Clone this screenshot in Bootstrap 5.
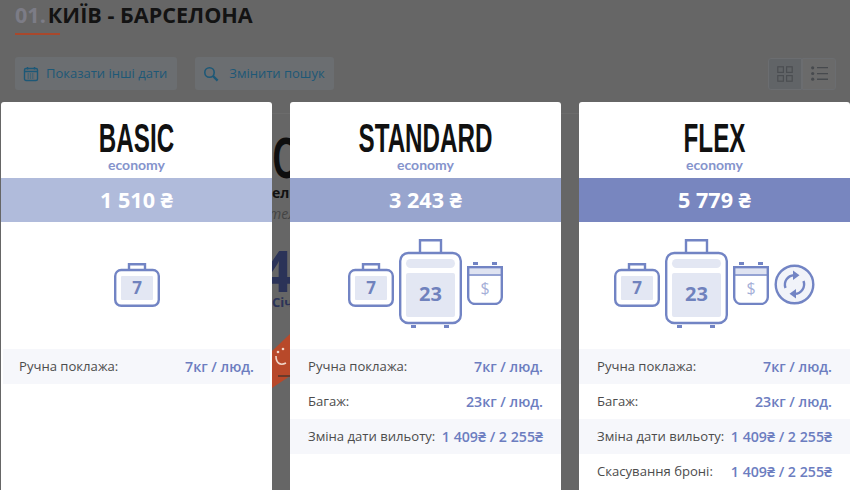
<!DOCTYPE html>
<html lang="uk">
<head>
<meta charset="utf-8">
<title>Київ - Барселона</title>
<link href="https://cdn.jsdelivr.net/npm/bootstrap@5.3.0/dist/css/bootstrap.min.css" rel="stylesheet">
<style>
html,body{height:490px;overflow:hidden}
body{background:#666;font-family:"Open Sans","Noto Sans",sans-serif;color:#4c4c4c}
.stage{position:relative;height:490px;overflow:hidden;padding:0 14px 0 15px}
.trip-title{font-size:21.6px;line-height:28px;font-weight:700;color:#131313;margin:0;padding-top:1px;white-space:nowrap}
.trip-title span{color:#7c7c86;margin-right:2px}
.title-rule{width:45px;height:2px;background:#a9482c;margin-top:4px}
.tools{margin-top:22px;height:33px}
.tool-btn{height:33px;background:#6b6e71;color:#1d5877;font-size:13px;border-radius:3px;padding:0 10px 0 8px;gap:7px;border:0}
.tool-btn:hover{background:#6b6e71;color:#1d5877}
.tool-btn.second{padding:0 9px 0 8px;gap:10px}
.gap-after{margin-right:18px}
.view-a,.view-b{width:34px;height:32px;border:1px solid #6b6d70}
.view-a{background:#616467;border-radius:3px 0 0 3px}
.view-b{background:#6a6a6a;border-radius:0 3px 3px 0}
.under{margin:23px -14px 0 257px;border-top:1px solid #6c6c6c;height:400px;overflow:hidden;white-space:nowrap}
.under-c{font-family:"Liberation Sans",sans-serif;font-weight:700;font-size:58px;line-height:44px;color:#0e0e0e;margin-top:22px;padding-left:1px;transform:scaleX(.62);transform-origin:left center}
.under-a{font-size:14px;font-weight:700;line-height:18px;color:#111;margin-top:4px}
.under-b{font-size:14px;font-style:italic;line-height:18px;color:#444;margin-top:3px;margin-left:-3px}
.under-4{font-size:58px;line-height:44px;font-weight:700;color:#2b3358;margin-top:25px;margin-left:-12px}
.under-d{font-size:13px;font-weight:700;line-height:18px;color:#2b3358;margin-top:1px}
.under-logo{display:block;margin-top:23px}
.fares{position:absolute;left:1px;top:102px;width:849px;gap:18px}
.fare{flex:1 1 0;height:420px;border:0;border-radius:3px;background:#fff;overflow:hidden;--bs-card-bg:#fff}
.fare-head{height:76px;padding-top:18px;text-align:center}
.fare-name{font-family:"Liberation Sans",sans-serif;font-weight:700;font-size:41px;line-height:36px;color:#111;margin:0;transform:scaleX(.59);white-space:nowrap}
.fare-class{font-family:Lato,"Noto Sans",sans-serif;font-size:14px;font-weight:700;line-height:16px;color:#8593cc;margin-top:1px}
.fare-price{height:44px;color:#fff;font-size:21.6px;font-weight:700}
.tone-1{background:#b0bbdb}
.tone-2{background:#98a5ce}
.tone-3{background:#7886bf}
.fare-icons{height:127px;padding-top:17px;align-items:flex-start;gap:5px}
.ico-num{font-family:"Open Sans",sans-serif;font-weight:700;fill:#7082bd;text-anchor:middle}
.ico-line{fill:none;stroke:#7284c4;stroke-width:2.4}
.drop-bag{margin-top:24px}
.drop-fee{margin-top:22px}
.drop-swap{margin-top:25px}
.fare-row{height:35px;padding:0 18px;font-size:13.1px;color:#4c4c4c}
.fare-row:nth-child(odd){background:#f6f7fb}
.fare-row b{font-weight:600;font-size:14.2px;color:#6c7dc0}
.inset-rows{margin:0 2px}
.inset-rows .fare-row{padding:0 16px}
</style>
</head>
<body>
<div class="stage">
  <h1 class="trip-title"><span>01.</span>КИЇВ - БАРСЕЛОНА</h1>
  <div class="title-rule"></div>

  <div class="tools d-flex align-items-center">
    <button type="button" class="tool-btn gap-after btn d-flex align-items-center">
      <svg width="16" height="16" viewBox="0 0 16 16" fill="none" stroke="#1d5877" stroke-width="1.4"><rect x="1.5" y="2.5" width="13" height="12" rx="1.5"/><path d="M1.500 5.500h13M4.500 1v2.500M11.500 1v2.500"/><path d="M4.500 8h7M4.500 10h7M4.500 12h7" stroke-width="1" stroke-dasharray="1.4 .9"/></svg>
      <span>Показати інші дати</span>
    </button>
    <button type="button" class="tool-btn second btn d-flex align-items-center">
      <svg width="16" height="16" viewBox="0 0 16 16" fill="none" stroke="#1d5877"><circle cx="6.500" cy="6.500" r="4.700" stroke-width="1.6"/><path d="M10 10l4.600 4.600" stroke-width="2.4"/></svg>
      <span>Змінити пошук</span>
    </button>
    <div class="d-flex ms-auto">
      <div class="view-a d-flex align-items-center justify-content-center">
        <svg width="16" height="16" viewBox="0 0 16 16" fill="none" stroke="#4b4e52" stroke-width="1.2"><rect x=".8" y=".8" width="5.600" height="5.600"/><rect x="9.600" y=".8" width="5.600" height="5.600"/><rect x=".8" y="9.600" width="5.600" height="5.600"/><rect x="9.600" y="9.600" width="5.600" height="5.600"/></svg>
      </div>
      <div class="view-b d-flex align-items-center justify-content-center">
        <svg width="17" height="15" viewBox="0 0 17 15" fill="#474a4e"><circle cx="1.700" cy="1.800" r="1.600"/><circle cx="1.700" cy="7.500" r="1.600"/><circle cx="1.700" cy="13.200" r="1.600"/><path d="M6 1h11v1.300H6zM6 6.900h11v1.300H6zM6 12.600h11v1.300H6z"/></svg>
      </div>
    </div>
  </div>

  <div class="under">
    <div class="under-c">С</div>
    <div class="under-a">ел</div>
    <div class="under-b">тел</div>
    <div class="under-4">4</div>
    <div class="under-d">Січ</div>
    <svg class="under-logo" width="18" height="56" viewBox="0 0 18 56"><path d="M0 17L18 0V42L0 54Z" fill="#b8492a"/><path d="M4 22c0 7 4 10 10 7" fill="none" stroke="#f0d5c8" stroke-width="1.6"/><circle cx="6" cy="18" r="1.300" fill="#f0d5c8"/><circle cx="11" cy="15" r="1.300" fill="#f0d5c8"/><path d="M6 42h12" stroke="#6a3a2a" stroke-width="2"/></svg>
  </div>

  <div class="fares d-flex">
    <!-- BASIC -->
    <div class="fare card">
      <div class="fare-head">
        <h2 class="fare-name">BASIC</h2>
        <div class="fare-class">economy</div>
      </div>
      <div class="fare-price tone-1 d-flex align-items-center justify-content-center">1 510 ₴</div>
      <div class="fare-icons d-flex justify-content-center">
        <svg class="drop-bag" width="46" height="44" viewBox="0 0 46 44"><g class="ico-line"><path d="M15 7V1.200h16V7"/><rect x="1.200" y="7" width="43.600" height="35.800" rx="6"/></g><rect x="7" y="13" width="32" height="24" rx="1" fill="#e3e7f3"/><text x="23" y="31" font-size="17" class="ico-num">7</text></svg>
      </div>
      <div class="fare-rows inset-rows">
        <div class="fare-row d-flex justify-content-between align-items-center"><span>Ручна поклажа:</span><b>7кг / люд.</b></div>
      </div>
    </div>

    <!-- STANDARD -->
    <div class="fare card">
      <div class="fare-head">
        <h2 class="fare-name">STANDARD</h2>
        <div class="fare-class">economy</div>
      </div>
      <div class="fare-price tone-2 d-flex align-items-center justify-content-center">3 243 ₴</div>
      <div class="fare-icons d-flex justify-content-center">
        <svg class="drop-bag" width="46" height="44" viewBox="0 0 46 44"><g class="ico-line"><path d="M15 7V1.200h16V7"/><rect x="1.200" y="7" width="43.600" height="35.800" rx="6"/></g><rect x="7" y="13" width="32" height="24" rx="1" fill="#e3e7f3"/><text x="23" y="31" font-size="17" class="ico-num">7</text></svg>
        <svg width="63" height="90" viewBox="0 0 63 90"><g class="ico-line"><path d="M21 14V1.200h21V14"/><rect x="1.200" y="14" width="60.600" height="70" rx="8"/></g><rect x="7" y="20" width="49" height="9" rx="4.500" fill="#e3e7f3"/><rect x="7" y="34" width="49" height="44" rx="2" fill="#e3e7f3"/><text x="31.500" y="62" font-size="20" class="ico-num">23</text><rect x="12" y="86" width="5" height="3" fill="#7284c4"/><rect x="45" y="86" width="5" height="3" fill="#7284c4"/></svg>
        <svg class="drop-fee" width="36" height="44" viewBox="0 0 36 44"><rect x="6" y="1" width="5" height="3" fill="#7284c4"/><rect x="25" y="1" width="5" height="3" fill="#7284c4"/><rect x="2" y="8" width="32" height="5" fill="#dfe3f1"/><path class="ico-line" d="M1.200 6.200h33.600v30a6.800 6.800 0 0 1-6.800 6.800H8a6.800 6.800 0 0 1-6.800-6.800z"/><path d="M2 14h32" stroke="#7284c4" stroke-width="1.500"/><text x="18" y="33" font-size="16" text-anchor="middle" fill="#a5afd8" font-family="Open Sans">$</text></svg>
      </div>
      <div class="fare-rows">
        <div class="fare-row d-flex justify-content-between align-items-center"><span>Ручна поклажа:</span><b>7кг / люд.</b></div>
        <div class="fare-row d-flex justify-content-between align-items-center"><span>Багаж:</span><b>23кг / люд.</b></div>
        <div class="fare-row d-flex justify-content-between align-items-center"><span>Зміна дати вильоту:</span><b>1 409₴ / 2 255₴</b></div>
      </div>
    </div>

    <!-- FLEX -->
    <div class="fare card">
      <div class="fare-head">
        <h2 class="fare-name">FLEX</h2>
        <div class="fare-class">economy</div>
      </div>
      <div class="fare-price tone-3 d-flex align-items-center justify-content-center">5 779 ₴</div>
      <div class="fare-icons d-flex justify-content-center">
        <svg class="drop-bag" width="46" height="44" viewBox="0 0 46 44"><g class="ico-line"><path d="M15 7V1.200h16V7"/><rect x="1.200" y="7" width="43.600" height="35.800" rx="6"/></g><rect x="7" y="13" width="32" height="24" rx="1" fill="#e3e7f3"/><text x="23" y="31" font-size="17" class="ico-num">7</text></svg>
        <svg width="63" height="90" viewBox="0 0 63 90"><g class="ico-line"><path d="M21 14V1.200h21V14"/><rect x="1.200" y="14" width="60.600" height="70" rx="8"/></g><rect x="7" y="20" width="49" height="9" rx="4.500" fill="#e3e7f3"/><rect x="7" y="34" width="49" height="44" rx="2" fill="#e3e7f3"/><text x="31.500" y="62" font-size="20" class="ico-num">23</text><rect x="12" y="86" width="5" height="3" fill="#7284c4"/><rect x="45" y="86" width="5" height="3" fill="#7284c4"/></svg>
        <svg class="drop-fee" width="36" height="44" viewBox="0 0 36 44"><rect x="6" y="1" width="5" height="3" fill="#7284c4"/><rect x="25" y="1" width="5" height="3" fill="#7284c4"/><rect x="2" y="8" width="32" height="5" fill="#dfe3f1"/><path class="ico-line" d="M1.200 6.200h33.600v30a6.800 6.800 0 0 1-6.800 6.800H8a6.800 6.800 0 0 1-6.800-6.800z"/><path d="M2 14h32" stroke="#7284c4" stroke-width="1.500"/><text x="18" y="33" font-size="16" text-anchor="middle" fill="#a5afd8" font-family="Open Sans">$</text></svg>
        <svg class="drop-swap" width="41" height="41" viewBox="0 0 41 41"><circle cx="20.500" cy="20.500" r="18.800" fill="#f1f3f9" stroke="#7284c4" stroke-width="2.4"/><g class="ico-line"><path d="M11.500 24A9.500 9.500 0 0 1 20 11.200"/><path d="M29.500 17A9.500 9.500 0 0 1 21 29.800"/></g><path d="M19 6.500l6.500 4.700-6.500 4.700zM22 25.100l-6.500 4.700 6.500 4.700z" fill="#7284c4"/></svg>
      </div>
      <div class="fare-rows">
        <div class="fare-row d-flex justify-content-between align-items-center"><span>Ручна поклажа:</span><b>7кг / люд.</b></div>
        <div class="fare-row d-flex justify-content-between align-items-center"><span>Багаж:</span><b>23кг / люд.</b></div>
        <div class="fare-row d-flex justify-content-between align-items-center"><span>Зміна дати вильоту:</span><b>1 409₴ / 2 255₴</b></div>
        <div class="fare-row d-flex justify-content-between align-items-center"><span>Скасування броні:</span><b>1 409₴ / 2 255₴</b></div>
      </div>
    </div>
  </div>
</div>
<script src="https://cdn.jsdelivr.net/npm/bootstrap@5.3.0/dist/js/bootstrap.bundle.min.js"></script>
</body>
</html>
